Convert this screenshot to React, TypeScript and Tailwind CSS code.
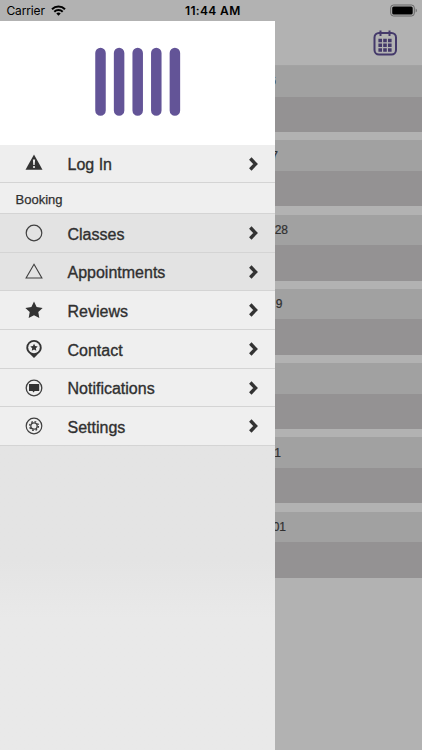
import React from 'react';

interface MenuRowProps {
  icon: React.ReactNode;
  label: string;
  className: string;
}

const STAR = 'M12 .8l3.500 7.300 8 1.100-5.800 5.600 1.400 8L12 19l-7.100 3.800 1.400-8L.5 9.200l8-1.100z';

const icons = {
  login: (
    <svg className="mb-[2px]" width="18" height="17" viewBox="0 0 18 17">
      <path d="M9 .5L17.500 15.800H.5z" fill="#333" />
      <path d="M7.900 5.500h2.200L9.700 11H8.300z" fill="#eee" />
      <circle cx="9" cy="13" r="1.100" fill="#eee" />
    </svg>
  ),
  classes: (
    <svg width="18" height="18" viewBox="0 0 18 18">
      <circle cx="9" cy="9" r="7.800" fill="none" stroke="#404040" strokeWidth="1.200" />
    </svg>
  ),
  appointments: (
    <svg width="18" height="17" viewBox="0 0 18 17">
      <path d="M9 1.300L16.900 15H1.100z" fill="none" stroke="#404040" strokeWidth="1.100" />
    </svg>
  ),
  reviews: (
    <svg width="18" height="18" viewBox="0 0 24 24">
      <path d={STAR} fill="#333" />
    </svg>
  ),
  contact: (
    <svg width="18" height="20" viewBox="0 0 18 20">
      <path d="M9 1a7.700 7.700 0 0 0-7.700 7.700c0 3.700 3.200 5.500 4.900 7.500L9 19l2.800-2.800c1.700-2 4.900-3.800 4.900-7.500A7.700 7.700 0 0 0 9 1z" fill="#333" />
      <circle cx="9" cy="8.500" r="5.800" fill="#eee" />
      <path d={STAR} fill="#333" transform="translate(5.200 4.500) scale(.32)" />
    </svg>
  ),
  notifications: (
    <svg width="18" height="18" viewBox="0 0 18 18">
      <circle cx="9" cy="9" r="7.800" fill="none" stroke="#404040" strokeWidth="1.300" />
      <path d="M4 5h10.200v7H9.700L8.500 13.600 7.500 12H4z" fill="#333" />
    </svg>
  ),
  settings: (
    <svg width="18" height="18" viewBox="0 0 18 18" fill="none" stroke="#404040">
      <circle cx="9" cy="9" r="7.800" strokeWidth="1.200" />
      <circle cx="9" cy="9" r="3.200" strokeWidth="1.300" />
      <circle cx="9" cy="9" r="4.400" strokeWidth="1.400" strokeDasharray="1.728 1.728" />
    </svg>
  ),
};

// only the end of each date sticks out from under the drawer
const days = [
  { date: '6', width: 'w-[1px]' },
  { date: '7', width: 'w-[3px]' },
  { date: '28', width: 'w-[13px]' },
  { date: '9', width: 'w-[7.500px]' },
  { date: '', width: 'w-0' },
  { date: '1', width: 'w-[6px]' },
  { date: '01', width: 'w-[11px]' },
];

const MenuRow: React.FC<MenuRowProps> = ({ icon, label, className }) => (
  <button className={`flex w-full items-center border-b border-[#d4d4d4] text-left ${className}`}>
    <span className="ml-[25px] flex w-[18px] justify-center">{icon}</span>
    <span className="ml-[24.500px] flex-1 pt-[3px] text-[16px] text-[#303030] [-webkit-text-stroke:0.35px_#303030]">{label}</span>
    <svg className="mr-[17px]" width="9" height="14" viewBox="0 0 9 14">
      <path d="M1.300 1.500L6.600 7l-5.300 5.500" fill="none" stroke="#333" strokeWidth="3.400" />
    </svg>
  </button>
);

const StatusBar = () => (
  <div className="flex h-[21px] shrink-0 items-center bg-[#b2b2b2] font-['Inter',sans-serif] text-[12px] text-black">
    <div className="flex w-[185px] items-center pl-[6.500px] pt-px">
      <span className="tracking-[-0.150px]">Carrier</span>
      <svg className="mb-px ml-[6px]" width="15" height="11" viewBox="0 0 15 11" fill="none" stroke="#000" strokeWidth="2">
        <path d="M1 4.200a9.200 9.200 0 0 1 13 0M3.300 6.700a6 6 0 0 1 8.400 0" />
        <path d="M7.500 10.700L5.300 8.500a3.100 3.100 0 0 1 4.400 0z" fill="#000" stroke="none" />
      </svg>
    </div>
    <span className="flex-1 pt-px font-semibold tracking-[0.350px]">11:44 AM</span>
    <svg className="mr-[4px]" width="28" height="13" viewBox="0 0 28 13">
      <rect x=".7" y="1" width="23.600" height="11" rx="2.800" fill="none" stroke="#666" />
      <rect x="2.200" y="2.500" width="20.500" height="8" rx="1.500" fill="#000" />
      <path d="M25.700 4.500v4c1.500-.5 1.500-3.500 0-4z" fill="#666" />
    </svg>
  </div>
);

const App = () => (
  <div className="flex h-[750px] w-[422px] flex-col overflow-hidden bg-[#b2b2b2] font-['Liberation_Sans',Arial,sans-serif]">
    <StatusBar />
    <div className="flex flex-1">
      <nav className="flex w-[275px] flex-col bg-linear-to-b from-[#e4e4e4] from-74% to-[#e9e9e9] to-82%">
        <div className="flex h-[124px] items-start justify-center bg-white pt-[26px]">
          <svg width="86" height="70" viewBox="0 0 86 70" stroke="#635497" strokeWidth="10.500" strokeLinecap="round">
            <path d="M5.500 6v57.500M24.100 6v57.500M42.700 6v57.500M61.300 6v57.500M79.900 6v57.500" />
          </svg>
        </div>
        <MenuRow icon={icons.login} label="Log In" className="h-[38px] bg-[#eee]" />
        <div className="flex h-[31px] items-center border-b border-[#d4d4d4] bg-[#efefef] pl-[15.500px] pt-[3px] text-[13px] text-[#303030] [-webkit-text-stroke:0.25px_#303030]">
          Booking
        </div>
        <MenuRow icon={icons.classes} label="Classes" className="h-[39px] bg-[#e3e3e3]" />
        <MenuRow icon={icons.appointments} label="Appointments" className="h-[38px] bg-[#e3e3e3]" />
        <MenuRow icon={icons.reviews} label="Reviews" className="h-[39px] bg-[#efefef]" />
        <MenuRow icon={icons.contact} label="Contact" className="h-[39px] bg-[#efefef]" />
        <MenuRow icon={icons.notifications} label="Notifications" className="h-[38px] bg-[#efefef]" />
        <MenuRow icon={icons.settings} label="Settings" className="h-[39px] bg-[#efefef]" />
      </nav>

      <main className="w-[147px] overflow-hidden">
        <header className="flex h-[45px] items-center justify-end border-b border-[#a3a3a3] pr-[24px]">
          <svg className="mb-px" width="26" height="28" viewBox="0 0 26 28" fill="none" stroke="#44396a" strokeWidth="2">
            <rect x="2.500" y="4" width="21.500" height="21.500" rx="4.500" />
            <path d="M8.500 1.500v5.500M17.500 1.500v5.500" />
            <path d="M6.400 11.500h13.500M6.400 16.300h13.500M6.400 21h13.500" strokeWidth="3.600" strokeDasharray="3.600 1.200" />
          </svg>
        </header>
        {days.map((day, i) => (
          <section key={i} className="mb-[8.300px]">
            <div className="flex h-[30.500px] items-center bg-[#a1a1a1] text-[12px] text-[#303030] [-webkit-text-stroke:0.2px_#303030]">
              <span className={`flex justify-end whitespace-nowrap ${day.width}`}>{day.date}</span>
            </div>
            <div className="h-[35.500px] bg-[#949293]" />
          </section>
        ))}
      </main>
    </div>
  </div>
);

export default App;
